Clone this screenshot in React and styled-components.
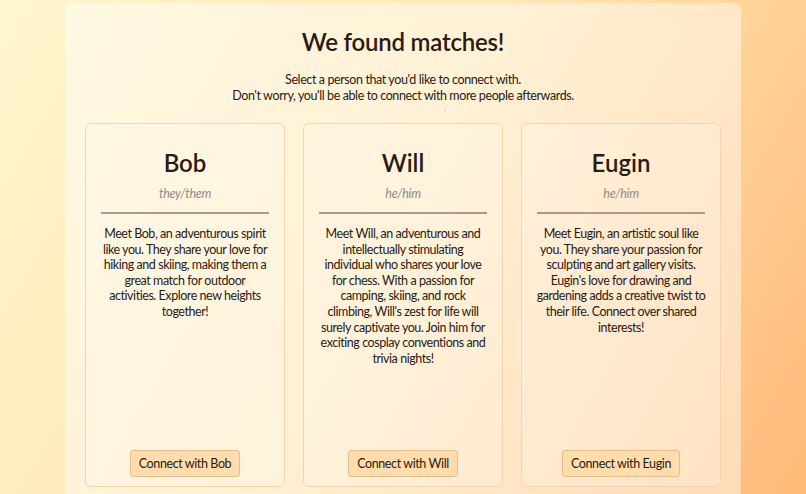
import React from "react";
import styled, { createGlobalStyle } from "styled-components";

const Global = createGlobalStyle`
  html, body { margin: 0; padding: 0; }
  body {
    min-height: 100vh;
    background: linear-gradient(120deg, #fff6cf 0%, #ffe4b0 50%, #ffb877 100%);
    font-family: Lato, "Noto Sans", sans-serif;
    color: #2b1a12;
    overflow: hidden;
  }
`;

const Page = styled.div`
  display: flex;
  justify-content: center;
  padding-top: 3px;
`;

const Panel = styled.main`
  width: 676px;
  box-sizing: border-box;
  padding: 24px 20px 20px;
  background: rgba(255, 255, 255, 0.45);
  border-radius: 7px;
  display: flex;
  flex-direction: column;
  align-items: center;
`;

const Title = styled.h1`
  margin: 0;
  font-size: 24px;
  font-weight: 600;
  line-height: 30px;
  letter-spacing: -0.2px;
`;

const Subtitle = styled.p`
  margin: 15px 0 0;
  font-size: 12.5px;
  line-height: 16px;
  letter-spacing: -0.4px;
  text-align: center;
`;

const Cards = styled.div`
  margin-top: 19px;
  display: grid;
  grid-template-columns: repeat(3, 200px);
  gap: 18px;
`;

const Card = styled.section`
  box-sizing: border-box;
  min-height: 364px;
  padding: 23px 15px 9px;
  border: 1px solid #f5d4aa;
  border-radius: 6px;
  background: rgba(255, 255, 255, 0.18);
  display: flex;
  flex-direction: column;
  align-items: center;
  text-align: center;
`;

const Name = styled.h2`
  margin: 0;
  font-size: 24px;
  font-weight: 600;
  line-height: 32px;
`;

const Pronouns = styled.div`
  margin-top: 7px;
  font-size: 12.5px;
  font-style: italic;
  font-weight: 400;
  letter-spacing: -0.3px;
  color: #918a84;
  line-height: 16px;
`;

const Rule = styled.hr`
  align-self: stretch;
  margin: 10px 0 0;
  border: none;
  border-top: 2px solid #a59c8c;
  height: 0;
`;

const Description = styled.p`
  align-self: stretch;
  margin: 12px -6px 0;
  font-size: 12.5px;
  line-height: 15.6px;
  letter-spacing: -0.45px;
  white-space: pre-line;
`;

const Button = styled.button`
  margin-top: auto;
  height: 27px;
  padding: 0 8px;
  border: 1px solid #e3be8d;
  border-radius: 3px;
  background: #fedcab;
  color: #2b1a12;
  font-family: inherit;
  font-size: 12.5px;
  letter-spacing: -0.4px;
  cursor: pointer;
`;

const people = [
  {
    name: "Bob",
    pronouns: "they/them",
    lines: [
      "Meet Bob, an adventurous spirit",
      "like you. They share your love for",
      "hiking and skiing, making them a",
      "great match for outdoor",
      "activities. Explore new heights",
      "together!",
    ],
  },
  {
    name: "Will",
    pronouns: "he/him",
    lines: [
      "Meet Will, an adventurous and",
      "intellectually stimulating",
      "individual who shares your love",
      "for chess. With a passion for",
      "camping, skiing, and rock",
      "climbing, Will's zest for life will",
      "surely captivate you. Join him for",
      "exciting cosplay conventions and",
      "trivia nights!",
    ],
  },
  {
    name: "Eugin",
    pronouns: "he/him",
    lines: [
      "Meet Eugin, an artistic soul like",
      "you. They share your passion for",
      "sculpting and art gallery visits.",
      "Eugin's love for drawing and",
      "gardening adds a creative twist to",
      "their life. Connect over shared",
      "interests!",
    ],
  },
];

export default function App() {
  return (
    <>
      <Global />
      <Page>
        <Panel>
          <Title>We found matches!</Title>
          <Subtitle>
            Select a person that you'd like to connect with.
            <br />
            Don't worry, you'll be able to connect with more people afterwards.
          </Subtitle>
          <Cards>
            {people.map((p) => (
              <Card key={p.name}>
                <Name>{p.name}</Name>
                <Pronouns>{p.pronouns}</Pronouns>
                <Rule />
                <Description>{p.lines.join("\n")}</Description>
                <Button>Connect with {p.name}</Button>
              </Card>
            ))}
          </Cards>
        </Panel>
      </Page>
    </>
  );
}
